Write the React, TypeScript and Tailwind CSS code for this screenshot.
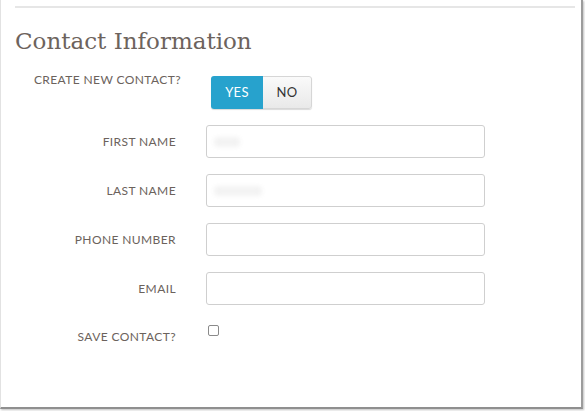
import React from "react";

const labelCls =
  "text-[12px] tracking-[0.4px] text-[#6b625c] uppercase [font-family:Lato,sans-serif]";

function Row({ label, blur }: { label: string; blur?: number }) {
  return (
    <div className="flex items-center h-[33px]">
      <div className={"w-[175px] text-right " + labelCls}>{label}</div>
      <div className="ml-[30px] w-[279px] h-[33px] rounded-[3px] border border-[#cfcfcf] bg-white flex items-center pl-[7px]">
        {blur ? (
          <span
            className="h-[10px] bg-[#f3f3f3] blur-[2px] rounded-sm"
            style={{ width: blur }}
          />
        ) : null}
      </div>
    </div>
  );
}

export default function App() {
  return (
    <div className="w-[585px] h-[411px] bg-white">
      <div className="w-[583px] h-[409px] bg-white border-l border-l-[#e2e2e2] border-r-2 border-r-[#9c9c9c] border-b-2 border-b-[#8f8f8f] shadow-[1px_1px_2px_rgba(0,0,0,0.25)] flex flex-col">
        <div className="mt-[6px] ml-[14px] mr-[6px] h-[2px] bg-[#e6e6e6]" />
        <h1 className="mt-[19px] ml-[14px] text-[23px] leading-[28px] text-[#6d635d] [font-family:'DejaVu_Serif',serif]">
          Contact Information
        </h1>
        <div className="mt-[21px] flex items-start">
          <div className={"w-[180px] text-right leading-[16px] -mt-[4px] " + labelCls}>
            Create New Contact?
          </div>
          <div className="ml-[30px] flex h-[33px] rounded-[3px] overflow-hidden shadow-[0_1px_1px_rgba(0,0,0,0.15)]">
            <div className="w-[52px] bg-[#27a2cd] text-white flex items-center justify-center text-[13px] [font-family:Lato,sans-serif] tracking-[0.3px]">
              YES
            </div>
            <div className="w-[49px] bg-gradient-to-b from-[#fafafa] to-[#e9e9e9] border border-l-0 border-[#d6d6d6] rounded-r-[3px] text-[#333] flex items-center justify-center text-[13px] [font-family:Lato,sans-serif] tracking-[0.3px]">
              NO
            </div>
          </div>
        </div>
        <div className="mt-[16px] flex flex-col gap-[16px]">
          <Row label="First Name" blur={26} />
          <Row label="Last Name" blur={48} />
          <Row label="Phone Number" />
          <Row label="Email" />
        </div>
        <div className="mt-[20px] flex items-start">
          <div className={"w-[175px] text-right pt-[3px] " + labelCls}>
            Save Contact?
          </div>
          <div className="ml-[32px] w-[11px] h-[11px] rounded-[2px] border border-[#8a8a8a] bg-white" />
        </div>
      </div>
    </div>
  );
}
